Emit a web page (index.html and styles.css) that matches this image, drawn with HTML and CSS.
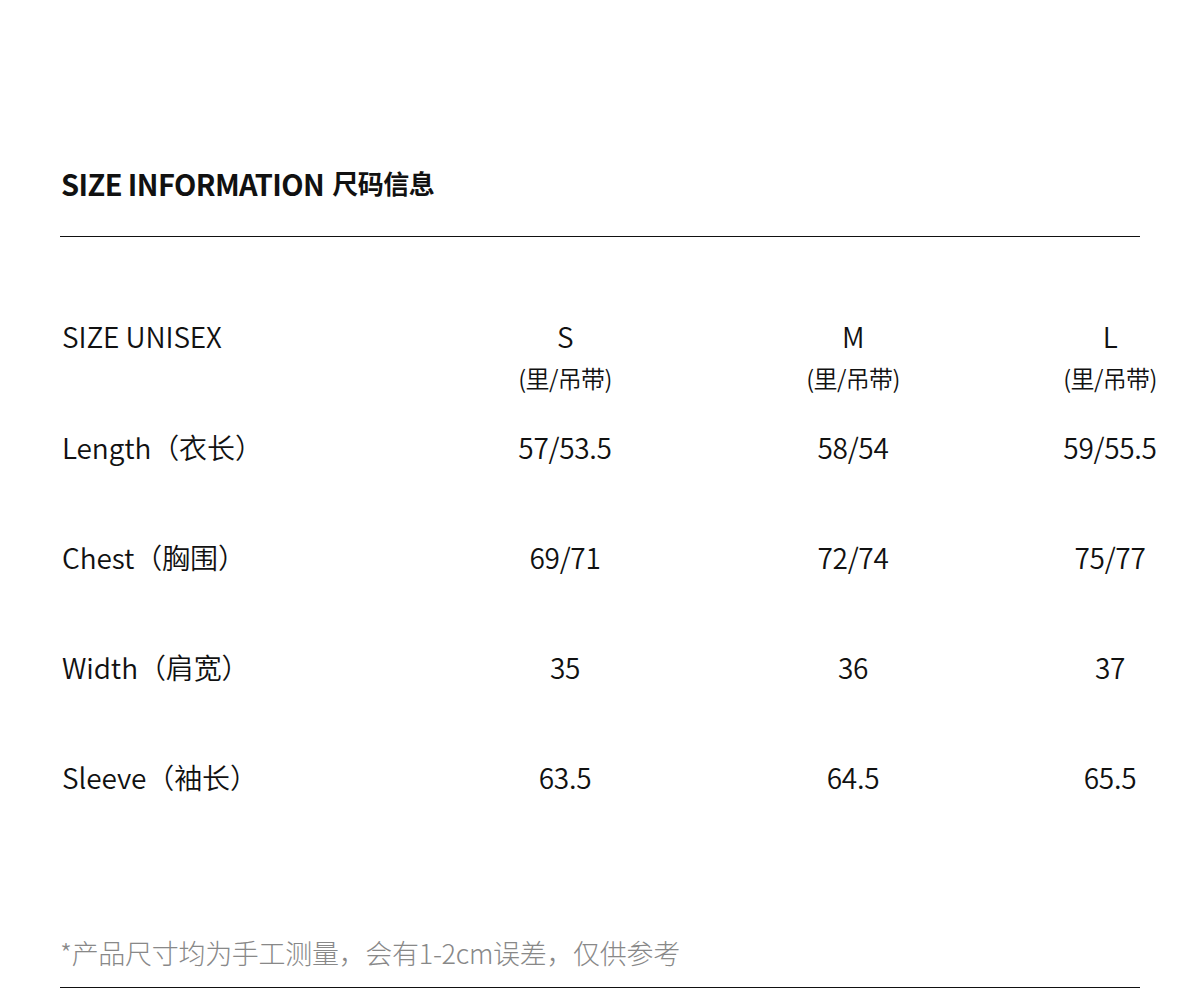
FILE: index.html
```html
<!DOCTYPE html>
<html lang="zh-CN">
<head>
<meta charset="utf-8">
<title>Size Information</title>
<link rel="stylesheet" href="styles.css">
</head>
<body>
<main class="page">
  <h1 class="title"><span class="title-en">SIZE INFORMATION</span><span class="title-cn">尺码信息</span></h1>
  <div class="rule"></div>

  <section class="table">
    <div class="row head">
      <div class="label">SIZE UNISEX</div>
      <div class="cell"><div class="size">S</div><div class="sub">(里/吊带)</div></div>
      <div class="cell"><div class="size">M</div><div class="sub">(里/吊带)</div></div>
      <div class="cell"><div class="size">L</div><div class="sub">(里/吊带)</div></div>
    </div>
    <div class="row">
      <div class="label">Length（衣长）</div>
      <div class="cell">57/53.5</div>
      <div class="cell">58/54</div>
      <div class="cell">59/55.5</div>
    </div>
    <div class="row">
      <div class="label">Chest（胸围）</div>
      <div class="cell">69/71</div>
      <div class="cell">72/74</div>
      <div class="cell">75/77</div>
    </div>
    <div class="row">
      <div class="label">Width（肩宽）</div>
      <div class="cell">35</div>
      <div class="cell">36</div>
      <div class="cell">37</div>
    </div>
    <div class="row">
      <div class="label">Sleeve（袖长）</div>
      <div class="cell">63.5</div>
      <div class="cell">64.5</div>
      <div class="cell">65.5</div>
    </div>
  </section>

  <p class="note">*产品尺寸均为手工测量，会有1-2cm误差，仅供参考</p>
  <div class="rule"></div>
</main>
</body>
</html>
```

FILE: styles.css
```css
html, body {
  margin: 0;
  padding: 0;
  background: #fff;
  overflow-x: hidden;
}

body {
  font-family: "Noto Sans CJK SC", "Noto Sans", sans-serif;
  color: #111;
}

.page {
  width: 1080px;
  padding: 163px 0 0 60px;
}

.title {
  margin: 0 0 33px 1px;
  height: 40px;
  line-height: 40px;
  font-weight: 700;
  display: flex;
  align-items: center;
  gap: 8px;
  letter-spacing: -0.6px;
}

.title-en {
  font-size: 29px;
}

.title-cn {
  font-size: 26px;
  letter-spacing: -0.5px;
}

.rule {
  height: 1px;
  background: #111;
}

.table {
  margin-top: 79px;
  display: flex;
  flex-direction: column;
  gap: 70px;
}

.row {
  display: grid;
  grid-template-columns: 359px 288px 288px 226px;
  font-size: 28px;
  font-weight: 350;
  line-height: 40px;
  height: 40px;
  margin-left: 2px;
  letter-spacing: -0.1px;
}

.row.head {
  height: 78px;
  margin-bottom: -37px;
}

.label {
  white-space: nowrap;
}

.cell {
  text-align: center;
  white-space: nowrap;
  letter-spacing: -0.3px;
}

.size {
  line-height: 40px;
}

.sub {
  margin-top: 6px;
  font-size: 24px;
  line-height: 32px;
  letter-spacing: -0.6px;
}

.note {
  margin: 136px 0 14px 0;
  font-size: 27px;
  font-weight: 300;
  line-height: 40px;
  color: #888;
  letter-spacing: -0.3px;
}
```
